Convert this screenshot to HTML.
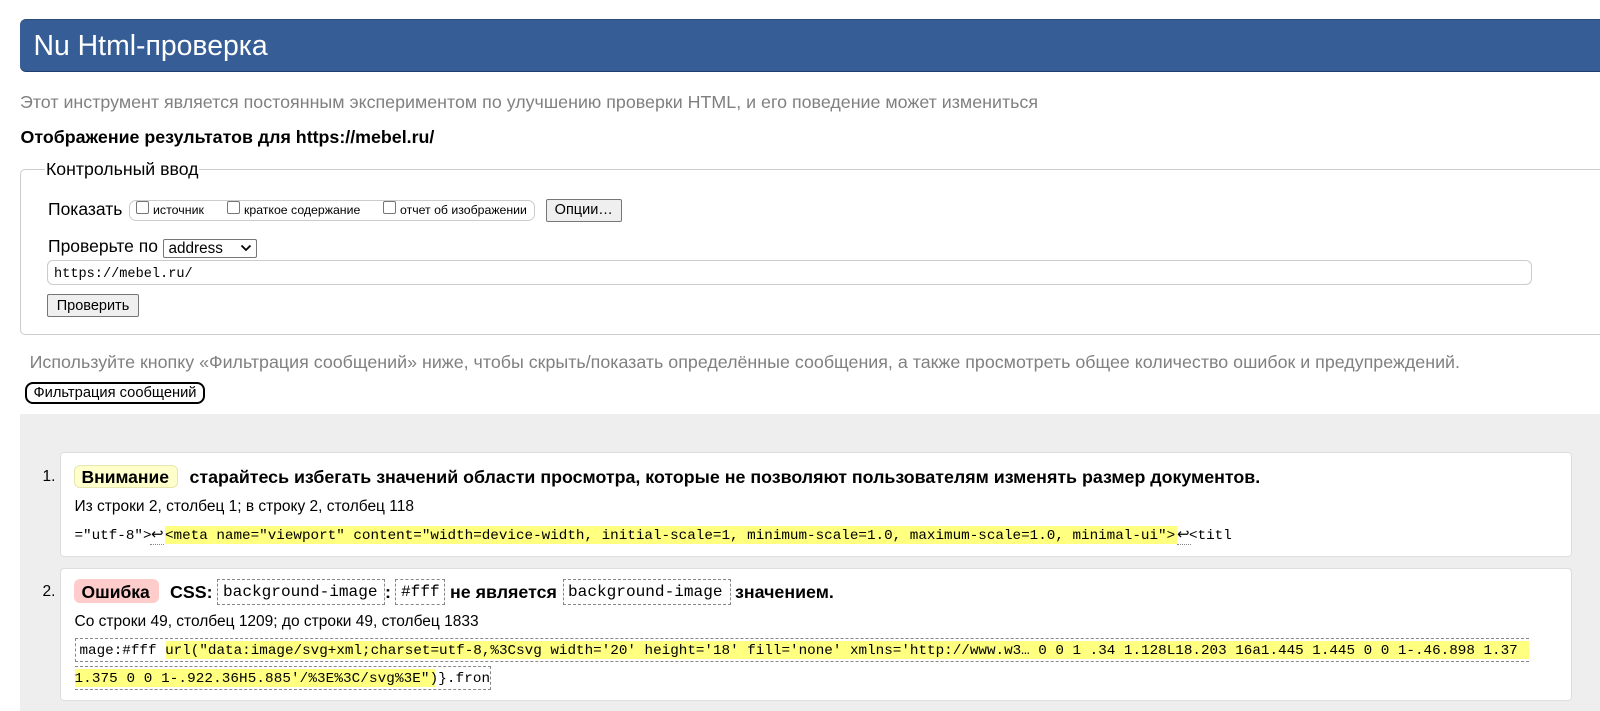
<!DOCTYPE html>
<html lang="ru"><head><meta charset="utf-8"><title>Nu Html-проверка</title>
<style>
html,body{margin:0;padding:0;background:#fff}
body{width:1600px;height:710px;position:relative;overflow:hidden;font-family:"Liberation Sans",sans-serif;color:#000}
.a{position:absolute;white-space:nowrap;box-sizing:border-box}
.t{position:absolute;white-space:pre;line-height:20px}
.m{font-family:"Liberation Mono",monospace;font-size:14.28px}
.h{font-size:17.82px;font-weight:bold}
.g{font-size:17.85px;color:#808080}
.btn{background:#efefef;border:1px solid #767676;border-radius:2px;font-size:14.5px;text-align:center;color:#000}
.cb{position:absolute;width:13px;height:13px;box-sizing:border-box;border:1px solid #767676;border-radius:2px;background:#fff}
.hl{background:#ffff80}
.dash{position:absolute;box-sizing:border-box;border:1px dashed #888}
.card{position:absolute;left:60px;width:1512px;background:#fff;border:1px solid #ddd;border-radius:4px;box-sizing:border-box}
</style></head><body>
<div class="a" style="left:20px;top:18.500px;width:1600px;height:53.500px;background:#365d95;border-radius:6px;border-top:1px solid #2a4a78;border-bottom:1px solid #1f3f6d"></div>
<div class="t" style="left:33.500px;top:31px;font-size:28.400px;line-height:30px;color:#fff">Nu Html-проверка</div>
<div class="t g" style="left:20px;top:92px">Этот инструмент является постоянным экспериментом по улучшению проверки HTML, и его поведение может измениться</div>
<div class="t h" style="left:20.500px;top:127px">Отображение результатов для https://mebel.ru/</div>

<div class="a" style="left:20px;top:169px;width:1600px;height:166px;border:1px solid #ccc;border-radius:5px"></div>
<div class="t" style="left:45px;top:159px;font-size:17.700px;background:#fff;padding:0 1px">Контрольный ввод</div>
<div class="t" style="left:48px;top:199px;font-size:17.500px">Показать</div>
<div class="a" style="left:128.500px;top:199.500px;width:406px;height:21px;border:1px solid #ccc;border-radius:7px"></div>
<div class="cb" style="left:136px;top:201px"></div>
<div class="t" style="left:153px;top:200px;font-size:12.400px">источник</div>
<div class="cb" style="left:226.500px;top:201px"></div>
<div class="t" style="left:244px;top:200px;font-size:12.300px">краткое содержание</div>
<div class="cb" style="left:382.500px;top:201px"></div>
<div class="t" style="left:400px;top:200px;font-size:12.300px">отчет об изображении</div>
<div class="a btn" style="left:545.500px;top:199px;width:76.500px;height:22.500px;line-height:21.500px">Опции…</div>
<div class="t" style="left:48px;top:236px;font-size:17.500px">Проверьте по</div>
<div class="a" style="left:163px;top:238.500px;width:94px;height:19.500px;border:1px solid #767676;border-radius:2px;background:#fff;font-size:15.300px;line-height:17.500px;padding-left:4.500px">address
<svg style="position:absolute;left:76px;top:4.500px" width="12" height="8" viewBox="0 0 12 8"><path d="M1.500 1.500L6 6l4.500-4.500" fill="none" stroke="#000" stroke-width="1.800"/></svg></div>
<div class="a" style="left:47px;top:260px;width:1484.500px;height:25px;border:1px solid #ccc;border-radius:6px"></div>
<div class="t m" style="left:54px;top:265px;font-size:13.600px">https://mebel.ru/</div>
<div class="a btn" style="left:47px;top:294px;width:92px;height:23px;line-height:23px">Проверить</div>

<div class="t g" style="left:29.600px;top:352px">Используйте кнопку «Фильтрация сообщений» ниже, чтобы скрыть/показать определённые сообщения, а также просмотреть общее количество ошибок и предупреждений.</div>
<div class="a" style="left:25px;top:382px;width:180px;height:22px;border:2px solid #000;border-radius:8px;background:#fff;font-size:14.700px;line-height:18px;text-align:center">Фильтрация сообщений</div>

<div class="a" style="left:20px;top:413.500px;width:1580px;height:297px;background:#eee"></div>

<div class="card" style="top:452px;height:105px"></div>
<div class="t" style="left:42.500px;top:467px;font-size:15.500px">1.</div>
<div class="a" style="left:74px;top:465px;width:104px;height:23px;background:#ffffcc;border:1px solid #e6e6b0;border-radius:6px"></div>
<div class="t h" style="left:81.500px;top:467px;font-size:17.500px">Внимание</div>
<div class="t h" style="left:189.500px;top:467px">старайтесь избегать значений области просмотра, которые не позволяют пользователям изменять размер документов.</div>
<div class="t" style="left:74.500px;top:497px;font-size:15.500px">Из строки 2, столбец 1; в строку 2, столбец 118</div>
<div class="a hl" style="left:165px;top:526px;width:1012px;height:17.500px"></div>
<div class="t m" style="left:74.500px;top:525.500px">="utf-8"&gt;</div>
<div class="t m" style="left:151px;top:525.500px;font-size:15px">↩</div>
<div class="a" style="left:150px;top:544px;width:14px;border-top:1px dotted #888"></div>
<div class="t m" style="left:165px;top:525.500px">&lt;meta name="viewport" content="width=device-width, initial-scale=1, minimum-scale=1.0, maximum-scale=1.0, minimal-ui"&gt;</div>
<div class="t m" style="left:1177px;top:525.500px;font-size:15px">↩</div>
<div class="a" style="left:1177px;top:544px;width:14px;border-top:1px dotted #888"></div>
<div class="t m" style="left:1189px;top:525.500px">&lt;titl</div>

<div class="card" style="top:567.500px;height:133px"></div>
<div class="t" style="left:42.500px;top:582px;font-size:15.500px">2.</div>
<div class="a" style="left:74px;top:579px;width:84.500px;height:23.500px;background:#ffcccc;border-radius:6px"></div>
<div class="t h" style="left:81.500px;top:581.500px;font-size:17.500px">Ошибка</div>
<div class="t h" style="left:170px;top:581.500px">CSS:</div>
<div class="dash" style="left:216.500px;top:578.500px;width:168px;height:26px"></div>
<div class="t m" style="left:223px;top:581.500px;font-size:16.100px">background-image</div>
<div class="t h" style="left:385px;top:581.500px">:</div>
<div class="dash" style="left:395px;top:578.500px;width:50px;height:26px"></div>
<div class="t m" style="left:401px;top:581.500px;font-size:16.100px">#fff</div>
<div class="t h" style="left:450px;top:581.500px">не является</div>
<div class="dash" style="left:562.500px;top:578.500px;width:168px;height:26px"></div>
<div class="t m" style="left:568px;top:581.500px;font-size:16.100px">background-image</div>
<div class="t h" style="left:735px;top:581.500px">значением.</div>
<div class="t" style="left:74.500px;top:612px;font-size:15.500px">Со строки 49, столбец 1209; до строки 49, столбец 1833</div>
<div class="a hl" style="left:165.500px;top:641px;width:1363px;height:18px"></div>
<div class="a hl" style="left:74.500px;top:669px;width:360px;height:18px"></div>
<div class="a" style="left:74.500px;top:638px;width:1454px;height:24px;border:1px dashed #888;border-right:0"></div>
<div class="a" style="left:74.500px;top:666px;width:416px;height:23.500px;border:1px dashed #888;border-left:0"></div>
<div class="t m" style="left:79.500px;top:641px">mage:#fff url("data:image/svg+xml;charset=utf-8,%3Csvg width='20' height='18' fill='none' xmlns='http://www.w3… 0 0 1 .34 1.128L18.203 16a1.445 1.445 0 0 1-.46.898 1.37</div>
<div class="t m" style="left:74.500px;top:669px;letter-spacing:.1px">1.375 0 0 1-.922.36H5.885'/%3E%3C/svg%3E")}.fron</div>
</body></html>
